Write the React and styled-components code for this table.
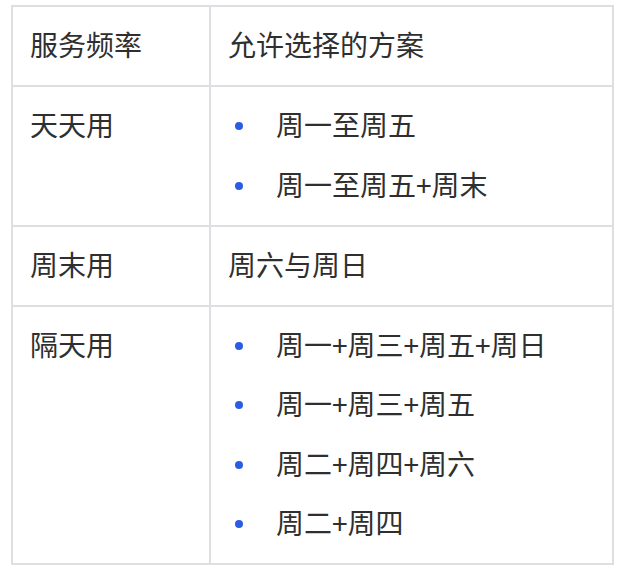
import React from 'react';
import styled, { createGlobalStyle } from 'styled-components';

const GlobalStyle = createGlobalStyle`
  html, body {
    margin: 0;
    padding: 0;
    background: #ffffff;
  }
  body {
    font-family: "Noto Sans CJK SC", "Noto Sans", sans-serif;
    color: #333333;
  }
`;

const Page = styled.div`
  padding: 5px 10px 8px 11px;
`;

const Table = styled.table`
  width: 603px;
  border-collapse: separate;
  border-spacing: 0;
  border-top: 2px solid #dfdfe3;
  border-left: 2px solid #dfdfe3;
  font-size: 28px;
  line-height: 40px;
  color: #2f2f2f;
`;

const Cell = styled.td`
  border-right: 2px solid #dfdfe3;
  border-bottom: 2px solid #dfdfe3;
  padding: 17px 16px 21px 17px;
  vertical-align: top;
  text-align: left;
  font-weight: 400;
  width: ${props => (props.$first ? '163px' : 'auto')};
`;

const List = styled.ul`
  list-style: none;
  margin: 0;
  padding: 0;
  display: flex;
  flex-direction: column;
  gap: 19.6px;
`;

const Item = styled.li`
  display: flex;
  align-items: center;
  gap: 33px;

  &::before {
    content: '';
    width: 8px;
    height: 8px;
    margin-left: 7px;
    margin-top: 4px;
    border-radius: 50%;
    background: #2b5ce6;
    flex-shrink: 0;
  }
`;

const rows = [
  { freq: '天天用', plans: ['周一至周五', '周一至周五+周末'] },
  { freq: '周末用', plans: '周六与周日' },
  { freq: '隔天用', plans: ['周一+周三+周五+周日', '周一+周三+周五', '周二+周四+周六', '周二+周四'] },
];

export default function App() {
  return (
    <Page>
      <GlobalStyle />
      <Table>
        <thead>
          <tr>
            <Cell as="th" $first>服务频率</Cell>
            <Cell as="th">允许选择的方案</Cell>
          </tr>
        </thead>
        <tbody>
          {rows.map(row => (
            <tr key={row.freq}>
              <Cell $first>{row.freq}</Cell>
              <Cell>
                {Array.isArray(row.plans) ? (
                  <List>
                    {row.plans.map(p => <Item key={p}>{p}</Item>)}
                  </List>
                ) : row.plans}
              </Cell>
            </tr>
          ))}
        </tbody>
      </Table>
    </Page>
  );
}
